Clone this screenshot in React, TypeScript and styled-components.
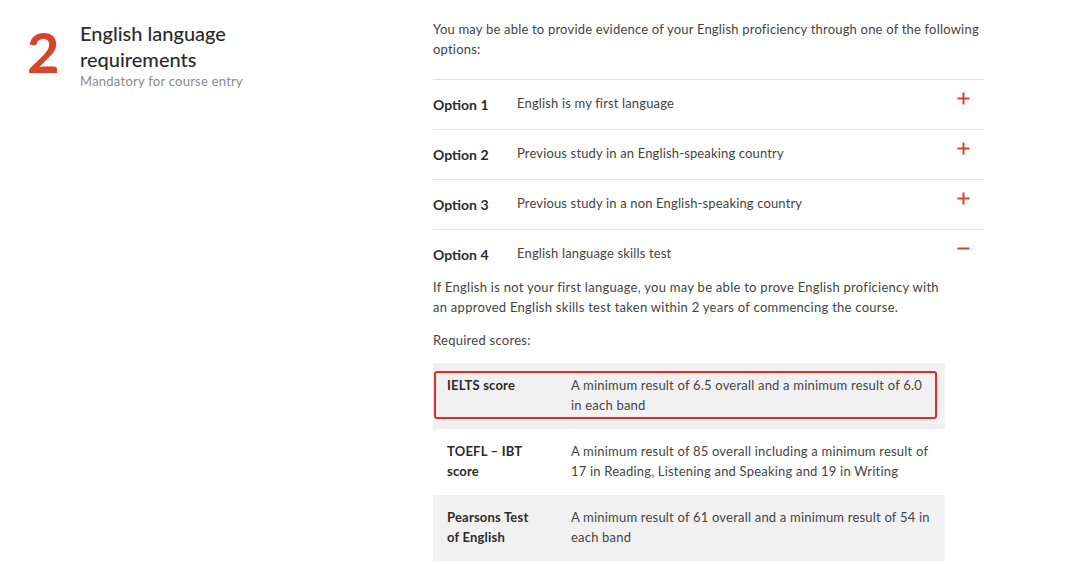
import React, { FC } from 'react'
import styled, { createGlobalStyle, css } from 'styled-components'

const red = '#d8432b'
const text = '#444444'
const dark = '#2b2b2b'
const divider = '#e3e3e3'
const shade = '#f1f1f1'

const GlobalStyle = createGlobalStyle`
  html, body {
    margin: 0;
    padding: 0;
    background: #ffffff;
    font-family: Lato, 'Open Sans', sans-serif;
    color: ${text};
  }
`

const Page = styled.div`
  display: flex;
  width: 1080px;
  height: 564px;
  overflow: hidden;
  padding: 19px 0 0 27px;
  box-sizing: border-box;
`

const Aside = styled.div`
  display: flex;
  align-items: flex-start;
  width: 406px;
  flex-shrink: 0;
`

const Numeral = styled.div`
  width: 53px;
  margin-top: 5px;
  font-size: 56px;
  line-height: 56px;
  font-weight: 700;
  color: ${red};
`

const Heading = styled.div`
  display: flex;
  flex-direction: column;
  padding-top: 1px;
`

const Title = styled.h2`
  margin: 0;
  width: 170px;
  font-size: 20px;
  line-height: 26px;
  font-weight: 500;
  color: ${dark};
`

const Subtitle = styled.div`
  font-size: 13px;
  line-height: 18px;
  color: #8a8a8a;
  letter-spacing: 0.25px;
`

const Main = styled.div`
  width: 551px;
  display: flex;
  flex-direction: column;
`

const Para = styled.p<{ gap?: number; spacing?: number }>`
  margin: 0 0 ${({ gap }) => gap ?? 0}px;
  font-size: 13px;
  line-height: 20px;
  letter-spacing: ${({ spacing }) => spacing ?? 0.27}px;
  color: ${text};
`

const Accordion = styled.div`
  margin-top: 20px;
  border-top: 1px solid ${divider};
`

const Item = styled.div<{ last?: boolean }>`
  display: flex;
  align-items: center;
  height: 47px;
  padding-bottom: 2px;
  box-sizing: border-box;
  ${({ last }) =>
    !last &&
    css`
      height: 50px;
      padding-bottom: 4px;
      border-bottom: 1px solid ${divider};
    `}
`

const OptionLabel = styled.div`
  width: 84px;
  flex-shrink: 0;
  font-size: 14px;
  font-weight: 700;
  color: ${dark};
  padding-top: 3px;
`

const OptionText = styled.div`
  flex: 1;
  font-size: 13px;
  color: ${text};
  letter-spacing: 0.15px;
`

const Toggle = styled.svg`
  width: 13px;
  height: 13px;
  margin-right: 14px;
  margin-top: -8px;
`

const Body = styled.div`
  width: 512px;
`

const Table = styled.div`
  display: flex;
  flex-direction: column;
  margin-top: 13px;
`

const Row = styled.div<{ shaded?: boolean }>`
  padding: 8px 8px 10px 1px;
  background: ${({ shaded }) => (shaded ? shade : '#ffffff')};
`

const RowInner = styled.div<{ highlight?: boolean }>`
  display: grid;
  grid-template-columns: 124px 1fr;
  padding: 2px 3px 2px 11px;
  border: 2px solid ${({ highlight }) => (highlight ? '#d9302a' : 'transparent')};
  border-radius: 3px;
`

const ScoreName = styled.div`
  font-size: 13px;
  line-height: 20px;
  font-weight: 700;
  letter-spacing: 0.2px;
  color: ${dark};
  padding-right: 30px;
`

const ScoreValue = styled.div`
  font-size: 13px;
  line-height: 20px;
  letter-spacing: 0.2px;
  color: ${text};
`

const Plus: FC = () => (
  <Toggle viewBox="0 0 13 13">
    <path d="M6.5 0.5v12M0.5 6.5h12" stroke={red} strokeWidth="2" />
  </Toggle>
)

const Minus: FC = () => (
  <Toggle viewBox="0 0 13 13">
    <path d="M0.5 6.5h12" stroke={red} strokeWidth="2" />
  </Toggle>
)

const options = [
  { label: 'Option 1', text: 'English is my first language' },
  { label: 'Option 2', text: 'Previous study in an English-speaking country' },
  { label: 'Option 3', text: 'Previous study in a non English-speaking country' },
  { label: 'Option 4', text: 'English language skills test', open: true },
]

const scores = [
  {
    name: 'IELTS score',
    value: 'A minimum result of 6.5 overall and a minimum result of 6.0 in each band',
    shaded: true,
    highlight: true,
  },
  {
    name: 'TOEFL – IBT score',
    value: 'A minimum result of 85 overall including a minimum result of 17 in Reading, Listening and Speaking and 19 in Writing',
  },
  {
    name: 'Pearsons Test of English',
    value: 'A minimum result of 61 overall and a minimum result of 54 in each band',
    shaded: true,
  },
]

const App: FC = () => {
  return (
    <>
      <GlobalStyle />
      <Page>
        <Aside>
          <Numeral>2</Numeral>
          <Heading>
            <Title>English language requirements</Title>
            <Subtitle>Mandatory for course entry</Subtitle>
          </Heading>
        </Aside>
        <Main>
          <Para spacing={0.2}>
            You may be able to provide evidence of your English proficiency through one of the following
            options:
          </Para>
          <Accordion>
            {options.map((o, i) => (
              <Item key={o.label} last={i === options.length - 1}>
                <OptionLabel>{o.label}</OptionLabel>
                <OptionText>{o.text}</OptionText>
                {o.open ? <Minus /> : <Plus />}
              </Item>
            ))}
          </Accordion>
          <Body>
            <Para gap={13}>
              If English is not your first language, you may be able to prove English proficiency with an
              approved English skills test taken within 2 years of commencing the course.
            </Para>
            <Para>Required scores:</Para>
            <Table>
              {scores.map((s) => (
                <Row key={s.name} shaded={s.shaded}>
                  <RowInner highlight={s.highlight}>
                    <ScoreName>{s.name}</ScoreName>
                    <ScoreValue>{s.value}</ScoreValue>
                  </RowInner>
                </Row>
              ))}
            </Table>
          </Body>
        </Main>
      </Page>
    </>
  )
}

export default App
